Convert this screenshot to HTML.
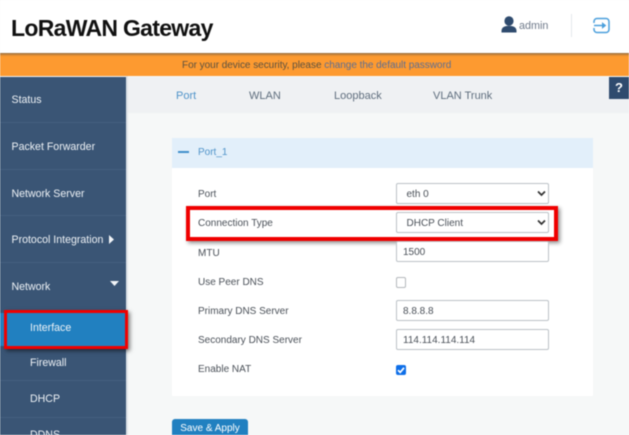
<!DOCTYPE html>
<html><head><meta charset="utf-8">
<style>
html,body{margin:0;padding:0;width:629px;height:435px;overflow:hidden;background:#f6f8f8;font-family:"Liberation Sans",sans-serif}
.a{position:absolute;white-space:nowrap}
#root{position:relative;width:629px;height:435px;overflow:hidden;filter:blur(.45px)}
.nav{color:#eef2f6;font-size:10.6px;left:11.5px;line-height:14px}
.sub{color:#eef2f6;font-size:10.6px;left:30px;line-height:14px}
.div{left:0;width:126px;height:1px;background:#445f7f}
.lab{left:198px;color:#4a5058;font-size:10px;line-height:14px}
.tab{top:89px;font-size:11px;line-height:14px;color:#5f6e7e}
.f{left:396px;width:151px;height:19px;border:1.5px solid #bcc2c7;border-radius:2px;background:#fff;color:#4a5058;font-size:10px;line-height:21px;text-indent:6px}
.s{text-indent:9.5px}
.chev{position:absolute;right:2px;top:6px}
</style></head><body>
<div id="root">
<div class="a" style="left:0;top:0;width:629px;height:54px;background:#fff"></div>
<div class="a" style="left:11px;top:13px;font-size:23px;line-height:30px;font-weight:bold;color:#111;letter-spacing:-.7px">LoRaWAN Gateway</div>
<svg class="a" style="left:501px;top:16px" width="16" height="17" viewBox="0 0 16 17"><ellipse cx="8" cy="5" rx="4.600" ry="4.800" fill="#2f4b6e"/><path d="M.5 16.500V15C.5 11.500 3.500 9.800 8 9.800s7.500 1.700 7.500 5.200v1.500z" fill="#2f4b6e"/></svg>
<div class="a" style="left:519px;top:19px;font-size:10.800px;line-height:14px;color:#6f7a8a">admin</div>
<div class="a" style="left:571px;top:14px;width:1px;height:23px;background:#e4e8ec"></div>
<svg class="a" style="left:593px;top:17px" width="17" height="17" viewBox="0 0 17 17" fill="none" stroke="#4b9fdc" stroke-width="1.500"><path d="M1 6V4.500a3 3 0 0 1 3-3h9a3 3 0 0 1 3 3v8a3 3 0 0 1-3 3H4a3 3 0 0 1-3-3V11"/><path d="M1 8.500h9"/><path d="M9.500 6.200l3 2.300-3 2.300z" fill="#4b9fdc" stroke-width="1"/></svg>

<div class="a" style="left:0;top:53px;width:629px;height:23px;background:linear-gradient(#8f6a3c 0,#c98338 1.500px,#fd9a30 3.500px)"></div>
<div class="a" style="left:182px;top:58.500px;font-size:10px;line-height:14px;color:#5b5140;letter-spacing:-.03px">For your device security, please <span style="color:#5d6e92">change the default password</span></div>

<div class="a" style="left:0;top:76px;width:126px;height:359px;background:#3a5575;border-top:1px solid #f2f2f2;box-sizing:border-box"></div>
<div class="a" style="left:126px;top:76px;width:2px;height:359px;background:#dfe4e8"></div>
<div class="a" style="left:128px;top:77px;width:501px;height:36px;background:#eff1f3"></div>
<div class="a tab" style="left:176px;color:#4f93c9">Port</div>
<div class="a tab" style="left:249px">WLAN</div>
<div class="a tab" style="left:334px">Loopback</div>
<div class="a tab" style="left:433px">VLAN Trunk</div>
<div class="a" style="left:609px;top:77px;width:20px;height:22px;background:#2f4b6e;color:#fff;font-weight:bold;font-size:13px;line-height:21px;text-align:center">?</div>

<div class="a div" style="top:122px"></div><div class="a div" style="top:169px"></div><div class="a div" style="top:215px"></div><div class="a div" style="top:262px"></div>
<div class="a div" style="top:380px"></div><div class="a div" style="top:417px"></div>
<div class="a nav" style="top:93px">Status</div>
<div class="a nav" style="top:140px">Packet Forwarder</div>
<div class="a nav" style="top:187px">Network Server</div>
<div class="a nav" style="top:233px">Protocol Integration</div>
<svg class="a" style="left:109px;top:235px" width="5" height="9"><path d="M0 0l5 4.500L0 9z" fill="#f2f5f8"/></svg>
<div class="a nav" style="top:280px">Network</div>
<svg class="a" style="left:110px;top:281px" width="9" height="5"><path d="M0 0h9L4.500 5z" fill="#f2f5f8"/></svg>

<div class="a" style="left:4px;top:310px;width:124px;height:39px;box-sizing:border-box;border:3.500px solid #f00000;background:#2180c0;box-shadow:2px 2px 4px rgba(0,0,0,.5)"></div>
<div class="a" style="left:0;top:313px;width:4px;height:33px;background:#2180c0"></div>
<div class="a sub" style="top:321px">Interface</div>
<div class="a sub" style="top:356px">Firewall</div>
<div class="a sub" style="top:392px">DHCP</div>
<div class="a sub" style="top:428px">DDNS</div>

<div class="a" style="left:172px;top:138px;width:421px;height:258px;background:#fff"></div>
<div class="a" style="left:172px;top:138px;width:421px;height:30px;background:#e2effa"></div>
<div class="a" style="left:178px;top:151px;width:11px;height:1.500px;background:#3f8fcb"></div>
<div class="a" style="left:198px;top:146px;font-size:10px;line-height:14px;color:#4f93c9">Port_1</div>

<div class="a lab" style="top:188px">Port</div>
<div class="a lab" style="top:217px">Connection Type</div>
<div class="a lab" style="top:247px">MTU</div>
<div class="a lab" style="top:276px">Use Peer DNS</div>
<div class="a lab" style="top:305px">Primary DNS Server</div>
<div class="a lab" style="top:334px">Secondary DNS Server</div>
<div class="a lab" style="top:363px">Enable NAT</div>

<div class="a f s" style="top:183px">eth 0<svg class="chev" width="9" height="7"><path d="M1 1.500l3.500 3.500L8 1.500" fill="none" stroke="#333" stroke-width="1.700"/></svg></div>
<div class="a" style="left:186px;top:206px;width:372px;height:35px;box-sizing:border-box;border:4px solid #f00000;box-shadow:2px 2px 4px rgba(0,0,0,.45)"></div>
<div class="a f s" style="top:212px">DHCP Client<svg class="chev" width="9" height="7"><path d="M1 1.500l3.500 3.500L8 1.500" fill="none" stroke="#333" stroke-width="1.700"/></svg></div>
<div class="a f" style="top:241px">1500</div>
<div class="a" style="left:396px;top:277px;width:10px;height:11px;box-sizing:border-box;border:1.500px solid #b4b8bc;border-radius:2px;background:#fff"></div>
<div class="a f" style="top:300px">8.8.8.8</div>
<div class="a f" style="top:329px">114.114.114.114</div>
<div class="a" style="left:396px;top:365px;width:10px;height:10px;background:#0f6fe8;border-radius:2px"></div>
<svg class="a" style="left:396px;top:365px" width="10" height="10"><path d="M2 5.200l2.200 2.200L8 2.800" fill="none" stroke="#fff" stroke-width="1.700"/></svg>

<div class="a" style="left:172px;top:419px;width:76px;height:20px;background:#2180c0;border-radius:3px;color:#fff;font-size:10px;line-height:19px;text-align:center">Save &amp; Apply</div>
</div>
</body></html>
